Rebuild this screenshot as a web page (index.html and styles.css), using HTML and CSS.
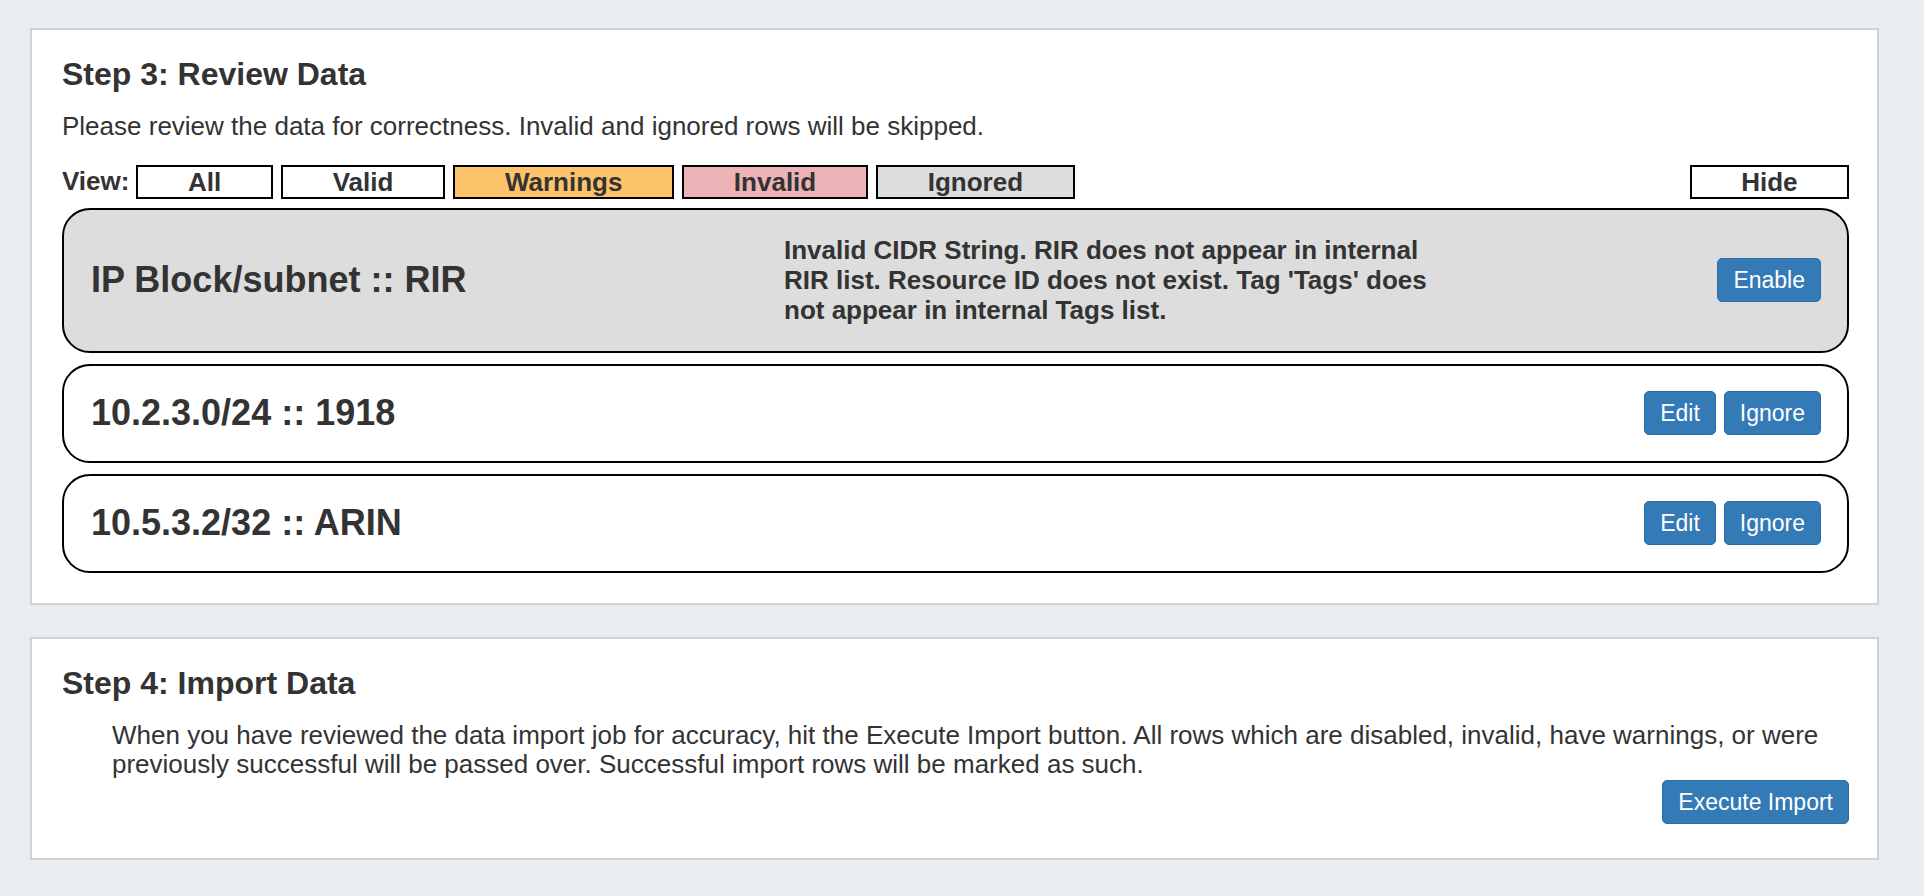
FILE: index.html
```html
<html>
<head>
<meta http-equiv="Content-Type" content="text/html;charset=UTF-8"><title>Import Data</title>
<link rel="stylesheet" href="styles.css">
</head>
<body>
<div class="page">

<div class="panel">
  <h3 class="step_title">Step 3: Review Data</h3>
  <p class="step_text">Please review the data for correctness. Invalid and ignored rows will be skipped.</p>

  <div class="view_bar">
    <span class="view_label">View:</span>
    <button type="button" class="ViewButton">All</button>
    <button type="button" class="ViewButton">Valid</button>
    <button type="button" class="ViewButton warn">Warnings</button>
    <button type="button" class="ViewButton invalid">Invalid</button>
    <button type="button" class="ViewButton ignored">Ignored</button>
    <button type="button" class="ViewButton HideButton">Hide</button>
  </div>

  <div class="row_list">
    <div class="DataRow ignored">
      <div class="row_name">IP Block/subnet :: RIR</div>
      <div class="row_errors">Invalid CIDR String. RIR does not appear in internal RIR list. Resource ID does not exist. Tag 'Tags' does not appear in internal Tags list.</div>
      <div class="row_actions">
        <button type="button" class="BlueButton">Enable</button>
      </div>
    </div>
    <div class="DataRow">
      <div class="row_name">10.2.3.0/24 :: 1918</div>
      <div class="row_errors"></div>
      <div class="row_actions">
        <button type="button" class="BlueButton">Edit</button>
        <button type="button" class="BlueButton">Ignore</button>
      </div>
    </div>
    <div class="DataRow">
      <div class="row_name">10.5.3.2/32 :: ARIN</div>
      <div class="row_errors"></div>
      <div class="row_actions">
        <button type="button" class="BlueButton">Edit</button>
        <button type="button" class="BlueButton">Ignore</button>
      </div>
    </div>
  </div>
</div>

<div class="panel">
  <h3 class="step_title">Step 4: Import Data</h3>
  <p class="step_text indent">When you have reviewed the data import job for accuracy, hit the Execute Import button. All rows which are disabled, invalid, have warnings, or were previously successful will be passed over. Successful import rows will be marked as such.</p>
  <div class="import_bar">
    <button type="button" class="BlueButton">Execute Import</button>
  </div>
</div>

</div>
</body></html>
```

FILE: styles.css
```css
body {
    background-color:#e9edf0;
    margin:0px;
    padding:0px;
    font-family:"Liberation Sans", Arial, Helvetica, sans-serif;
    color:#333333;
}

.page {
    padding:28px 45px 37px 30px;
    display:flex;
    flex-direction:column;
    gap:32px;
}

.panel {
    background-color:#ffffff;
    border:2px solid #cfd1d3;
    padding:27px 28px 30px 30px;
}

.step_title {
    font-size:32px;
    line-height:35px;
    font-weight:bold;
    margin:0px 0px 20px 0px;
}

.step_text {
    font-size:26px;
    line-height:29.5px;
    margin:0px 0px 23px 0px;
}

.step_text.indent {
    margin:0px 0px 0px 50px;
}

.view_bar {
    display:flex;
    align-items:center;
    gap:8.5px;
}

.view_label {
    font-size:26px;
    font-weight:bold;
    margin-right:-1.5px;
}

.ViewButton {
    font-family:inherit;
    font-size:26px;
    font-weight:bold;
    line-height:30px;
    color:#333333;
    background-color:#ffffff;
    border:2px solid #000000;
    padding:0px 49.5px;
    margin:0px;
}

.ViewButton.warn { background-color:#fdc36b; }
.ViewButton.invalid { background-color:#ecb4b6; }
.ViewButton.ignored { background-color:#dddddd; }
.HideButton { margin-left:auto; }

.row_list {
    margin-top:9px;
    display:flex;
    flex-direction:column;
    gap:11px;
}

.DataRow {
    display:flex;
    align-items:center;
    border:2px solid #000000;
    border-radius:28px;
    padding:25.5px 26px 25.5px 27px;
    background-color:#ffffff;
}

.DataRow.ignored {
    background-color:#dddddd;
}

.row_name {
    width:693px;
    flex:none;
    font-size:36px;
    font-weight:bold;
}

.row_errors {
    width:665px;
    flex:none;
    font-size:26px;
    line-height:30px;
    font-weight:bold;
}

.row_actions {
    margin-left:auto;
    display:flex;
    gap:8px;
}

.BlueButton {
    font-family:inherit;
    font-size:23px;
    line-height:30px;
    color:#ffffff;
    background-color:#337ab7;
    border:1px solid #2e6da4;
    border-radius:5px;
    padding:6px 15px;
    margin:0px;
}

.import_bar {
    display:flex;
    justify-content:flex-end;
    margin-bottom:4px;
}
```
